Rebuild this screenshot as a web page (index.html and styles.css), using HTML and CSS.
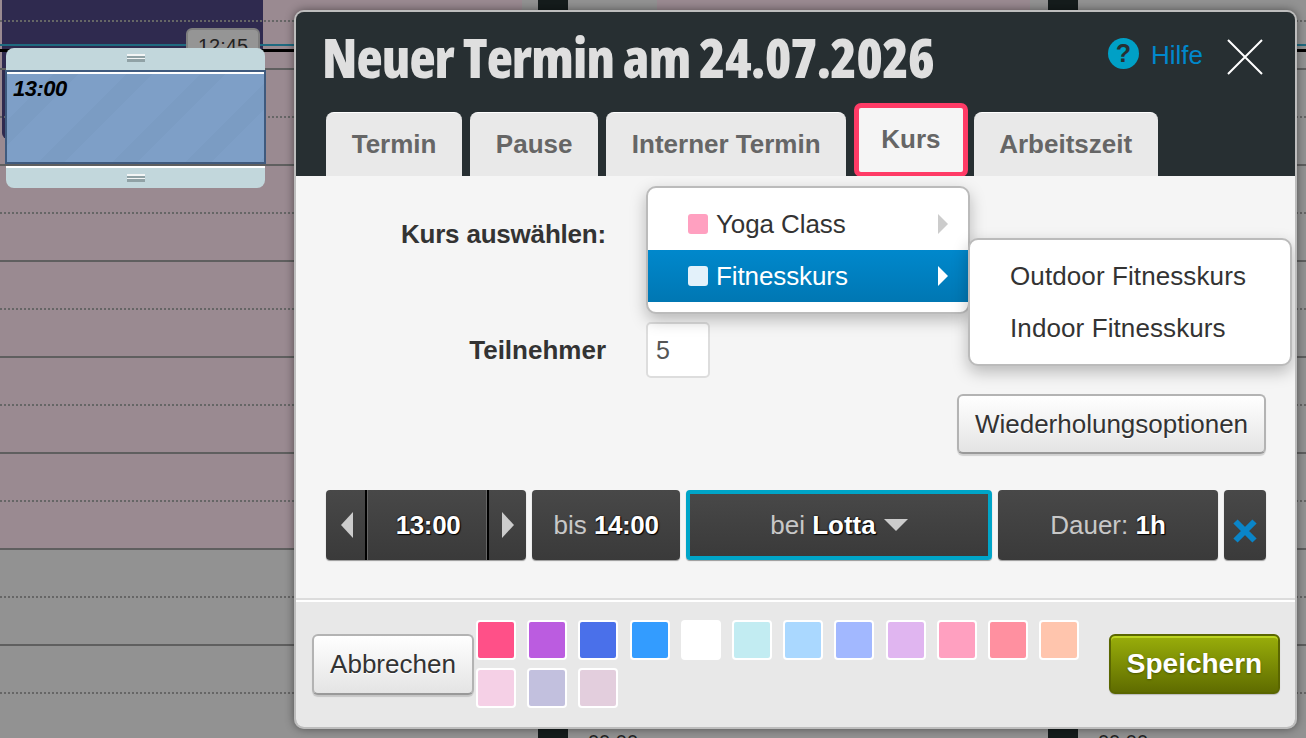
FILE: index.html
```html
<!DOCTYPE html>
<html lang="de">
<head>
    <meta charset="UTF-8">
    <meta name="viewport" content="width=device-width, initial-scale=1.0">
    <link rel="stylesheet" href="styles.css">
    <title>Neuer Termin</title>
</head>
<body>
    <div class="calendar">
        <div class="day day-left"><div class="open open-left"></div></div>
        <div class="time-col"></div>
        <div class="day day-middle"><div class="open open-middle"></div></div>
        <div class="time-col"></div>
        <div class="day day-right"></div>

        <!-- existing appointment sits under the grid lines -->
        <div class="old-event"></div>

        <div class="grid">
            <div class="hour"></div>
            <div class="hour"></div>
            <div class="hour"></div>
            <div class="hour"></div>
            <div class="hour"></div>
            <div class="hour"></div>
            <div class="hour"></div>
            <div class="hour"></div>
        </div>

        <div class="time-label-bottom tl-a">00:00</div>
        <div class="time-label-bottom tl-b">00:00</div>

        <div class="now-line"></div>
        <div class="drag-label">12:45</div>
        <div class="black-line"></div>
        <div class="new-event">
            <div class="handle handle-top"><span class="grip"></span></div>
            <div class="event-body">13:00</div>
            <div class="handle handle-bottom"><span class="grip"></span></div>
        </div>
    </div>

    <div class="dialog">
        <div class="dialog-head">
            <div class="title-row">
                <h1 class="title">Neuer Termin am 24.07.2026</h1>
                <a class="help"><span class="help-icon">?</span>Hilfe</a>
                <svg class="close" width="36" height="36" viewBox="0 0 36 36">
                    <path d="M1 1 L35 35 M35 1 L1 35" stroke="#fff" stroke-width="2" fill="none"/>
                </svg>
            </div>
            <div class="tabs">
                <div class="tab">Termin</div>
                <div class="tab">Pause</div>
                <div class="tab">Interner Termin</div>
                <div class="tab tab-active">Kurs</div>
                <div class="tab">Arbeitszeit</div>
            </div>
        </div>

        <div class="dialog-body">
            <div class="field field-course">
                <label class="field-label">Kurs auswählen:</label>
            </div>
            <div class="field field-people">
                <label class="field-label">Teilnehmer</label>
                <div class="number-input">5</div>
            </div>
            <div class="repeat-row">
                <button class="btn btn-repeat">Wiederholungsoptionen</button>
            </div>
            <div class="time-row">
                <div class="block block-start">
                    <span class="step step-prev"><i class="arrow-left"></i></span>
                    <b class="start-time">13:00</b>
                    <span class="step step-next"><i class="arrow-right"></i></span>
                </div>
                <div class="block block-until">bis&nbsp;<b>14:00</b></div>
                <div class="block block-staff">bei&nbsp;<b>Lotta</b><i class="caret"></i></div>
                <div class="block block-duration">Dauer:&nbsp;<b>1h</b></div>
                <div class="block block-remove">
                    <svg width="24" height="24" viewBox="0 0 24 24">
                        <path d="M2.5 2.5 L21.5 21.5 M21.5 2.5 L2.5 21.5" stroke="#0a85c8" stroke-width="6" fill="none"/>
                    </svg>
                </div>
            </div>

            <div class="menu menu-main">
                <div class="menu-item"><span class="dot dot-pink"></span>Yoga Class<i class="menu-arrow"></i></div>
                <div class="menu-item menu-item-on"><span class="dot dot-pale"></span>Fitnesskurs<i class="menu-arrow"></i></div>
            </div>
            <div class="menu menu-sub">
                <div class="menu-item">Outdoor Fitnesskurs</div>
                <div class="menu-item">Indoor Fitnesskurs</div>
            </div>
        </div>

        <div class="dialog-foot">
            <button class="btn btn-cancel">Abbrechen</button>
            <div class="swatches">
                <span class="swatch c1"></span>
                <span class="swatch c2"></span>
                <span class="swatch c3"></span>
                <span class="swatch c4"></span>
                <span class="swatch c5"></span>
                <span class="swatch c6"></span>
                <span class="swatch c7"></span>
                <span class="swatch c8"></span>
                <span class="swatch c9"></span>
                <span class="swatch c10"></span>
                <span class="swatch c11"></span>
                <span class="swatch c12"></span>
                <span class="swatch c13"></span>
                <span class="swatch c14"></span>
                <span class="swatch c15"></span>
            </div>
            <button class="btn-save">Speichern</button>
        </div>
    </div>
</body>
</html>
```

FILE: styles.css
```css
* {
    box-sizing: border-box;
}

html, body {
    margin: 0;
    padding: 0;
    height: 738px;
    overflow: hidden;
}

body {
    font-family: "Liberation Sans", Arial, sans-serif;
    color: #333;
}

/* calendar behind the dialog */
.calendar {
    position: relative;
    display: flex;
    height: 738px;
    overflow: hidden;
    background-color: #929292;
}

.day {
    display: flex;
}

.day-left {
    width: 538px;
}

.day-middle {
    width: 480px;
    padding-left: 89px;
}

.day-right {
    flex: 1;
}

.open {
    height: 548px;
    background-color: #9a8a91;
}

.open-left {
    width: 522px;
}

.open-middle {
    width: 373px;
}

.time-col {
    position: relative;
    z-index: 2;
    width: 30px;
    background-color: #151c1c;
}

.grid {
    position: absolute;
    top: -26px;
    left: 0;
    right: 0;
}

.hour {
    position: relative;
    height: 96px;
    border-bottom: 2px solid #5f5f5f;
}

/* square dots, 2px on and 2px off */
.hour::after {
    content: "";
    position: absolute;
    left: 0;
    right: 0;
    top: 46px;
    height: 2px;
    background-image: linear-gradient(90deg, #666 50%, transparent 50%);
    background-size: 4px 2px;
}

.time-label-bottom {
    position: absolute;
    top: 731px;
    z-index: 2;
    font-size: 20px;
    color: #222;
}

.tl-a {
    left: 588px;
}

.tl-b {
    left: 1098px;
}

.old-event {
    position: absolute;
    top: 0;
    left: 2px;
    width: 261px;
    height: 139px;
    background-color: #2f2a4f;
    border-radius: 0 0 6px 6px;
}

.now-line {
    position: absolute;
    top: 44px;
    left: 0;
    right: 0;
    height: 2px;
    background-color: #1f6a80;
}

.black-line {
    position: absolute;
    top: 49px;
    left: 0;
    right: 0;
    height: 3px;
    background-color: #000;
}

.drag-label {
    position: absolute;
    top: 28px;
    left: 186px;
    width: 74px;
    height: 30px;
    padding-top: 5px;
    text-align: center;
    font-size: 20px;
    color: #222;
    background-color: #959595;
    border: 2px solid #7f7f7f;
    border-radius: 6px;
}

.new-event {
    position: absolute;
    top: 48px;
    left: 5px;
    width: 261px;
}

.handle {
    display: flex;
    justify-content: center;
    margin: 0 1px;
    background-color: #c2d7dc;
}

.handle-top {
    height: 22px;
    padding-top: 6px;
    border-radius: 8px 8px 0 0;
}

.handle-bottom {
    height: 22px;
    padding-top: 6px;
    border-top: 2px solid #fff;
    margin-top: 2px;
    border-radius: 0 0 8px 8px;
}

.grip {
    width: 18px;
    height: 8px;
    background-image: linear-gradient(#f2f5f5 25%, #90a2a6 25%, #90a2a6 50%, #f2f5f5 50%, #f2f5f5 62%, #90a2a6 62%);
}

.event-body {
    height: 94px;
    padding: 5px 6px;
    font-size: 22px;
    line-height: 24px;
    font-weight: bold;
    font-style: italic;
    letter-spacing: -0.5px;
    color: #000;
    border: 2px solid #3f5a7e;
    box-shadow: inset 0 2px 0 #fff;
    background-color: #7e9fc7;
    background-image: repeating-linear-gradient(135deg, #7e9fc7 0, #7e9fc7 34px, #7b9cc3 34px, #7b9cc3 52px);
}

/* dialog */
.dialog {
    position: absolute;
    top: 10px;
    left: 294px;
    width: 1003px;
    height: 719px;
    display: flex;
    flex-direction: column;
    border: 2px solid #bdbdbd;
    border-radius: 10px;
    overflow: hidden;
    box-shadow: 0 0 10px rgba(0, 0, 0, 0.45);
    z-index: 5;
}

.dialog-head {
    height: 164px;
    flex-shrink: 0;
    display: flex;
    flex-direction: column;
    justify-content: space-between;
    padding: 0 30px;
    background-color: #272f32;
}

.title-row {
    display: flex;
    align-items: center;
    height: 91px;
    margin-left: -4px;
}

.title {
    flex: 1;
    margin: 0;
    font-family: "Open Sans", "Liberation Sans", sans-serif;
    font-size: 54px;
    font-weight: 800;
    font-stretch: 75%;
    letter-spacing: -0.85px;
    white-space: nowrap;
    color: #dfdfdf;
}

.help {
    display: flex;
    align-items: center;
    font-size: 26px;
    color: #0088cc;
    margin-top: -4px;
}

.help-icon {
    width: 31px;
    height: 31px;
    margin-right: 12px;
    margin-bottom: 3px;
    border-radius: 50%;
    text-align: center;
    font-size: 25px;
    line-height: 31px;
    font-weight: bold;
    color: #272f32;
    background-color: #00a0c6;
}

.close {
    margin-left: 24px;
    margin-right: 2px;
    margin-top: -1px;
}

.tabs {
    display: flex;
    align-items: flex-end;
    gap: 8px;
}

.tab {
    height: 64px;
    padding: 16px 25.7px 0;
    font-size: 26px;
    line-height: 30px;
    font-weight: bold;
    color: #666;
    background-color: #e9e9e9;
    border-top: 1px solid #fff;
    border-radius: 8px 8px 0 0;
}

.tab-active {
    position: relative;
    top: 1px;
    height: 74px;
    margin-right: -2px;
    padding: 16px 22px 0;
    background-color: #f5f5f5;
    border: 5px solid #ff3b66;
    border-radius: 7px;
}

.dialog-body {
    position: relative;
    flex: 1;
    padding-top: 30px;
    background-color: #f5f5f5;
    border-bottom: 2px solid #dcdcdc;
}

.field {
    display: flex;
    align-items: center;
    height: 56px;
}

.field-people {
    margin-top: 60px;
}

.field-label {
    width: 310px;
    margin-right: 40px;
    text-align: right;
    font-size: 26px;
    font-weight: bold;
    color: #333;
}

.field-course .field-label {
    letter-spacing: -0.2px;
}

.number-input {
    width: 64px;
    height: 56px;
    padding: 0 8px;
    font-size: 25px;
    line-height: 52px;
    color: #555;
    background-color: #fff;
    border: 2px solid #ddd;
    border-radius: 5px;
}

.repeat-row {
    display: flex;
    justify-content: flex-end;
    margin-top: 16px;
    padding-right: 29px;
}

.btn {
    font-family: inherit;
    font-size: 26px;
    color: #333;
    text-shadow: 0 1px 1px #fff;
    background-image: linear-gradient(#fff, #e4e4e4);
    border: 2px solid #b3b3b3;
    border-bottom-color: #999;
    border-radius: 6px;
    box-shadow: 0 2px 1px rgba(0, 0, 0, 0.15);
    padding: 0;
}

.btn-repeat {
    width: 309px;
    height: 60px;
}

.time-row {
    display: flex;
    gap: 6px;
    margin-top: 36px;
    padding-left: 30px;
}

.block {
    display: flex;
    align-items: center;
    justify-content: center;
    height: 70px;
    font-size: 26px;
    color: #c8c8c8;
    background-image: linear-gradient(#484848, #3a3a3a);
    border-radius: 4px;
    box-shadow: 0 1px 1px #999;
}

.block b {
    color: #fff;
    text-shadow: 0 0 2px #000, 1px 1px 1px #000;
}

.block-start {
    width: 200px;
    justify-content: space-between;
}

.step {
    display: flex;
    align-items: center;
    justify-content: center;
    height: 70px;
}

.step-prev {
    width: 39px;
    padding-left: 2px;
}

.step-next {
    width: 37px;
    padding-left: 1px;
}

.start-time {
    flex: 1;
    height: 70px;
    padding-left: 2px;
    line-height: 70px;
    text-align: center;
    letter-spacing: -0.4px;
    border-left: 2px solid #000;
    border-right: 2px solid #000;
    box-shadow: inset 1px 0 0 #666, inset -1px 0 0 #666;
}

.arrow-left {
    border-top: 13px solid transparent;
    border-bottom: 13px solid transparent;
    border-right: 12px solid #ccc;
}

.arrow-right {
    border-top: 13px solid transparent;
    border-bottom: 13px solid transparent;
    border-left: 12px solid #ccc;
}

.block-until {
    width: 148px;
}

.block-until b {
    letter-spacing: -0.4px;
}

.block-staff {
    width: 306px;
    border: 4px solid #00a5c8;
}

.caret {
    margin-left: 8px;
    border-left: 12px solid transparent;
    border-right: 12px solid transparent;
    border-top: 12px solid #ccc;
}

.block-duration {
    width: 220px;
}

.block-remove {
    width: 42px;
    align-items: flex-end;
    padding-bottom: 17px;
}

/* dropdown */
.menu {
    position: absolute;
    width: 324px;
    height: 128px;
    padding: 10px 0;
    font-size: 26px;
    letter-spacing: 0.1px;
    color: #333;
    background-color: #fff;
    border: 2px solid #bbb;
    border-radius: 10px;
    box-shadow: 0 6px 16px rgba(0, 0, 0, 0.25);
}

.menu-main {
    top: 10px;
    left: 350px;
    letter-spacing: -0.1px;
}

.menu-sub {
    top: 62px;
    left: 672px;
}

.menu-item {
    position: relative;
    display: flex;
    align-items: center;
    height: 52px;
    padding-left: 40px;
}

.menu-item-on {
    color: #fff;
    background-image: linear-gradient(#0088cc, #0077b3);
}

.dot {
    width: 20px;
    height: 20px;
    margin-right: 8px;
    border-radius: 3px;
}

.dot-pink {
    background-color: #ffa0c0;
}

.dot-pale {
    background-color: #e3f1fa;
}

.menu-arrow {
    position: absolute;
    right: 20px;
    top: 16px;
    border-top: 10px solid transparent;
    border-bottom: 10px solid transparent;
    border-left: 10px solid #ccc;
}

.menu-item-on .menu-arrow {
    border-left-color: #fff;
}

/* footer */
.dialog-foot {
    position: relative;
    flex-shrink: 0;
    height: 127px;
    display: flex;
    align-items: flex-start;
    padding: 18px 0 0 16px;
    background-color: #e8e8e8;
    border-top: 2px solid #fff;
}

.btn-cancel {
    width: 162px;
    height: 61px;
    margin-top: 14px;
}

.swatches {
    display: flex;
    flex-wrap: wrap;
    gap: 8px 11.2px;
    width: 614px;
    margin-left: 2px;
}

.swatch {
    width: 40px;
    height: 40px;
    border: 2px solid #fff;
    border-radius: 4px;
}

.c1 { background-color: #ff5088; }
.c2 { background-color: #bb5ce0; }
.c3 { background-color: #4a70ea; }
.c4 { background-color: #339cff; }
.c5 { background-color: #fff; }
.c6 { background-color: #c2ecf2; }
.c7 { background-color: #aad8ff; }
.c8 { background-color: #a2b8ff; }
.c9 { background-color: #e0b5f0; }
.c10 { background-color: #ffa0c0; }
.c11 { background-color: #ff90a0; }
.c12 { background-color: #ffc5ad; }
.c13 { background-color: #f5d0e6; }
.c14 { background-color: #c2c0de; }
.c15 { background-color: #e3cedd; }

.btn-save {
    width: 171px;
    height: 60px;
    margin-top: 14px;
    margin-left: 19px;
    padding: 0;
    font-family: inherit;
    font-size: 28px;
    font-weight: bold;
    color: #fff;
    text-shadow: 0 1px 2px #4d5700;
    background-image: linear-gradient(#99ae0a, #5f6c00);
    border: 2px solid #5a6600;
    border-radius: 6px;
    box-shadow: inset 0 2px 0 #bcd420, 0 1px 1px rgba(0, 0, 0, 0.2);
}
```
